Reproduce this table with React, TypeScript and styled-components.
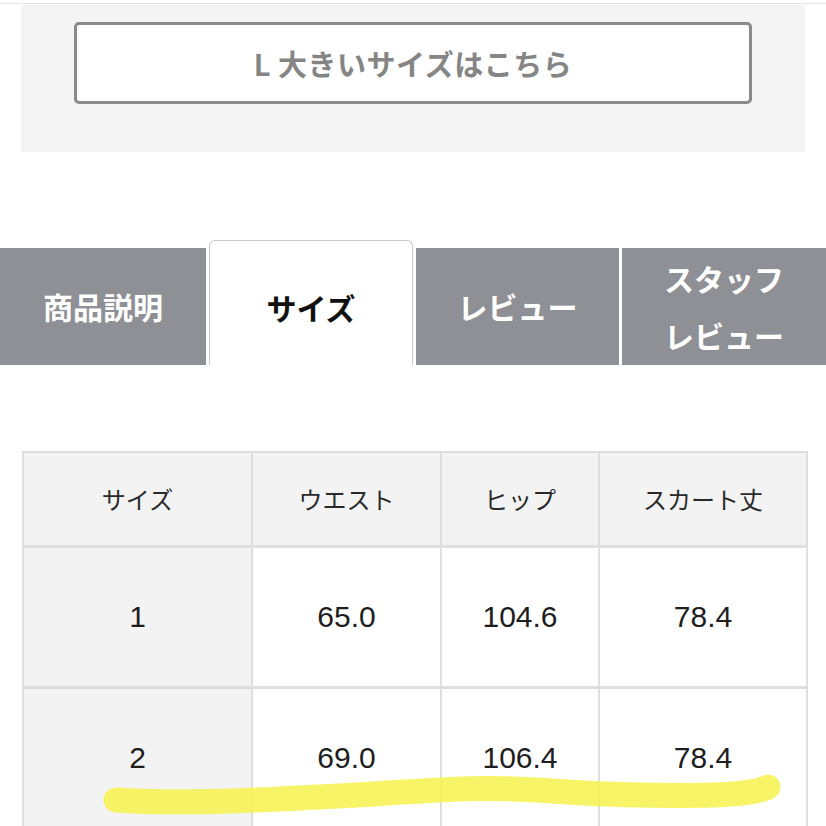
import React from "react";
import styled, { createGlobalStyle } from "styled-components";

const Global = createGlobalStyle`
  html, body { margin: 0; padding: 0; background: #ffffff; }
  body { font-family: "Noto Sans CJK JP", "Liberation Sans", sans-serif; overflow: hidden; }
  * { box-sizing: border-box; }
`;

const Page = styled.div`
  width: 826px;
  height: 826px;
  overflow: hidden;
  position: relative;
`;

const TopLine = styled.div`
  height: 4px;
  border-bottom: 1px solid #e4e4e4;
`;

const Panel = styled.div`
  margin: 1px 21px 0;
  padding: 17px 53px 48px;
  background: #f4f4f4;
`;

const BigButton = styled.div`
  height: 82px;
  border: 3px solid #8a8a8a;
  border-radius: 5px;
  background: #ffffff;
  display: flex;
  align-items: center;
  justify-content: center;
  color: #858585;
  font-size: 29px;
  font-weight: 700;
  letter-spacing: 0.5px;
`;

const Tabs = styled.div`
  margin-top: 88px;
  display: flex;
  align-items: flex-end;
  gap: 3px;
  height: 125px;
`;

const Tab = styled.div<{ $active?: boolean; $w: number }>`
  width: ${(p) => p.$w}px;
  height: ${(p) => (p.$active ? 125 : 117)}px;
  background: ${(p) => (p.$active ? "#ffffff" : "#8e9095")};
  color: ${(p) => (p.$active ? "#111111" : "#ffffff")};
  border: ${(p) => (p.$active ? "1px solid #c9c9c9" : "none")};
  border-bottom: none;
  border-radius: ${(p) => (p.$active ? "6px 6px 0 0" : "0")};
  display: flex;
  align-items: center;
  justify-content: center;
  text-align: center;
  font-size: 30px;
  font-weight: 700;
  line-height: 57px;
  padding-top: ${(p) => (p.$active ? "8px" : "0")};
`;

const TableWrap = styled.div`
  position: relative;
  margin-top: 86px;
  padding-left: 22px;
`;

const Table = styled.table`
  border-collapse: collapse;
  width: 784px;
  table-layout: fixed;
`;

const HeadCell = styled.th<{ $w: number }>`
  width: ${(p) => p.$w}px;
  height: 94px;
  background: #f3f3f4;
  border: 2px solid #dedede;
  font-family: "Noto Sans CJK JP", sans-serif;
  font-weight: 400;
  font-size: 24px;
  color: #2a2a2a;
  text-align: center;
  vertical-align: middle;
  padding: 0;
`;

const Cell = styled.td<{ $label?: boolean }>`
  height: 141px;
  background: ${(p) => (p.$label ? "#f3f3f4" : "#ffffff")};
  border: 2px solid #dedede;
  border-top-width: 3px;
  font-family: "Liberation Sans", Arial, sans-serif;
  font-size: 30px;
  color: #1e1e1e;
  text-align: center;
  vertical-align: middle;
  padding: 0;
`;

const Highlight = styled.svg`
  position: absolute;
  left: 0;
  top: 0;
  pointer-events: none;
`;

const rows = [
  ["1", "65.0", "104.6", "78.4"],
  ["2", "69.0", "106.4", "78.4"],
];

export default function App() {
  return (
    <Page>
      <Global />
      <TopLine />
      <Panel>
        <BigButton>L 大きいサイズはこちら</BigButton>
      </Panel>
      <Tabs>
        <Tab $w={206}>商品説明</Tab>
        <Tab $w={204} $active>
          サイズ
        </Tab>
        <Tab $w={203}>レビュー</Tab>
        <Tab $w={204}>
          スタッフ
          <br />
          レビュー
        </Tab>
      </Tabs>
      <TableWrap>
        <Table>
          <thead>
            <tr>
              <HeadCell $w={229}>サイズ</HeadCell>
              <HeadCell $w={189}>ウエスト</HeadCell>
              <HeadCell $w={158}>ヒップ</HeadCell>
              <HeadCell $w={208}>スカート丈</HeadCell>
            </tr>
          </thead>
          <tbody>
            {rows.map((r) => (
              <tr key={r[0]}>
                {r.map((v, i) => (
                  <Cell key={i} $label={i === 0}>
                    {v}
                  </Cell>
                ))}
              </tr>
            ))}
          </tbody>
        </Table>
        <Highlight width="826" height="400" viewBox="0 0 826 400">
          <path
            d="M116 349 C 200 355, 330 345, 440 339 C 520 334, 560 343, 640 344 C 700 345, 752 345, 768 336"
            fill="none"
            stroke="#f7f352"
            strokeOpacity="0.88"
            strokeWidth="25"
            strokeLinecap="round"
          />
        </Highlight>
      </TableWrap>
    </Page>
  );
}
